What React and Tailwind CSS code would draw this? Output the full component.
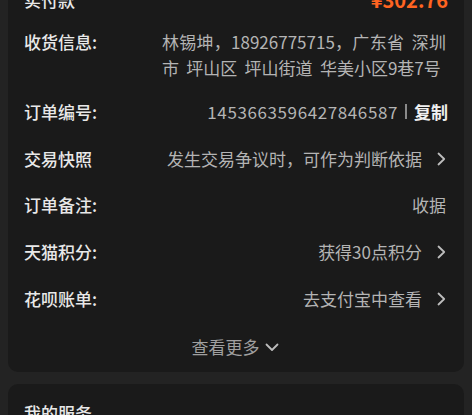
import React from "react";

const Chevron = () => (
  <svg width="9" height="14" viewBox="0 0 9 14" className="ml-[15px] shrink-0">
    <path d="M1.5 1.5 L7.2 7 L1.5 12.5" fill="none" stroke="#bdbdbd" strokeWidth="1.8" strokeLinecap="round" strokeLinejoin="round" />
  </svg>
);

const Row = ({ label, children }) => (
  <div className="flex h-[46.8px] items-center justify-between">
    <span className="font-medium text-[#e8e8e8]">{label}</span>
    <div className="flex items-center text-[#b4b4b4]">{children}</div>
  </div>
);

export default function App() {
  return (
    <div className="h-[415px] w-[472px] overflow-hidden bg-[#232323] px-2 font-[family-name:'Noto_Sans_CJK_SC','Noto_Sans',sans-serif] text-[17px] leading-[26px]">
      <div className="-mt-[30px] rounded-[10px] bg-[#1a1a1a] pl-4 pr-[18px] pt-[12px]">
        <div className="flex h-[36px] items-center justify-between">
          <span className="font-medium text-[#e8e8e8]">实付款</span>
          <span className="-mr-[2px] text-[20px] font-bold text-[#ff6421]">¥302.76</span>
        </div>
        <div className="flex items-start justify-between pb-[8px] pt-[10.5px]">
          <span className="font-medium text-[#e8e8e8]">收货信息:</span>
          <p className="w-[284px] text-justify text-[#b4b4b4] [word-spacing:3.5px]">
            林锡坤，18926775715，广东省 深圳市 坪山区 坪山街道 华美小区9巷7号
          </p>
        </div>
        <Row label="订单编号:">
          <span className="tracking-[0.6px]">1453663596427846587</span>
          <span className="mx-[7px] h-[15px] w-[2px] bg-[#8a8a8a]" />
          <span className="-mr-[2px] font-bold text-[#f0f0f0]">复制</span>
        </Row>
        <Row label="交易快照">
          <span>发生交易争议时，可作为判断依据</span>
          <Chevron />
        </Row>
        <Row label="订单备注:">
          <span>收据</span>
        </Row>
        <Row label="天猫积分:">
          <span>获得30点积分</span>
          <Chevron />
        </Row>
        <Row label="花呗账单:">
          <span>去支付宝中查看</span>
          <Chevron />
        </Row>
        <div className="flex h-[50px] items-center justify-center text-[#a0a0a0]">
          <span>查看更多</span>
          <svg width="14" height="9" viewBox="0 0 14 9" className="ml-[5px]">
            <path d="M1.5 1.5 L7 7 L12.5 1.5" fill="none" stroke="#bdbdbd" strokeWidth="1.8" strokeLinecap="round" strokeLinejoin="round" />
          </svg>
        </div>
      </div>
      <div className="mt-[12px] rounded-[10px] bg-[#1a1a1a] px-4 pt-[16px] pb-4">
        <span className="font-medium text-[#e8e8e8]">我的服务</span>
      </div>
    </div>
  );
}
